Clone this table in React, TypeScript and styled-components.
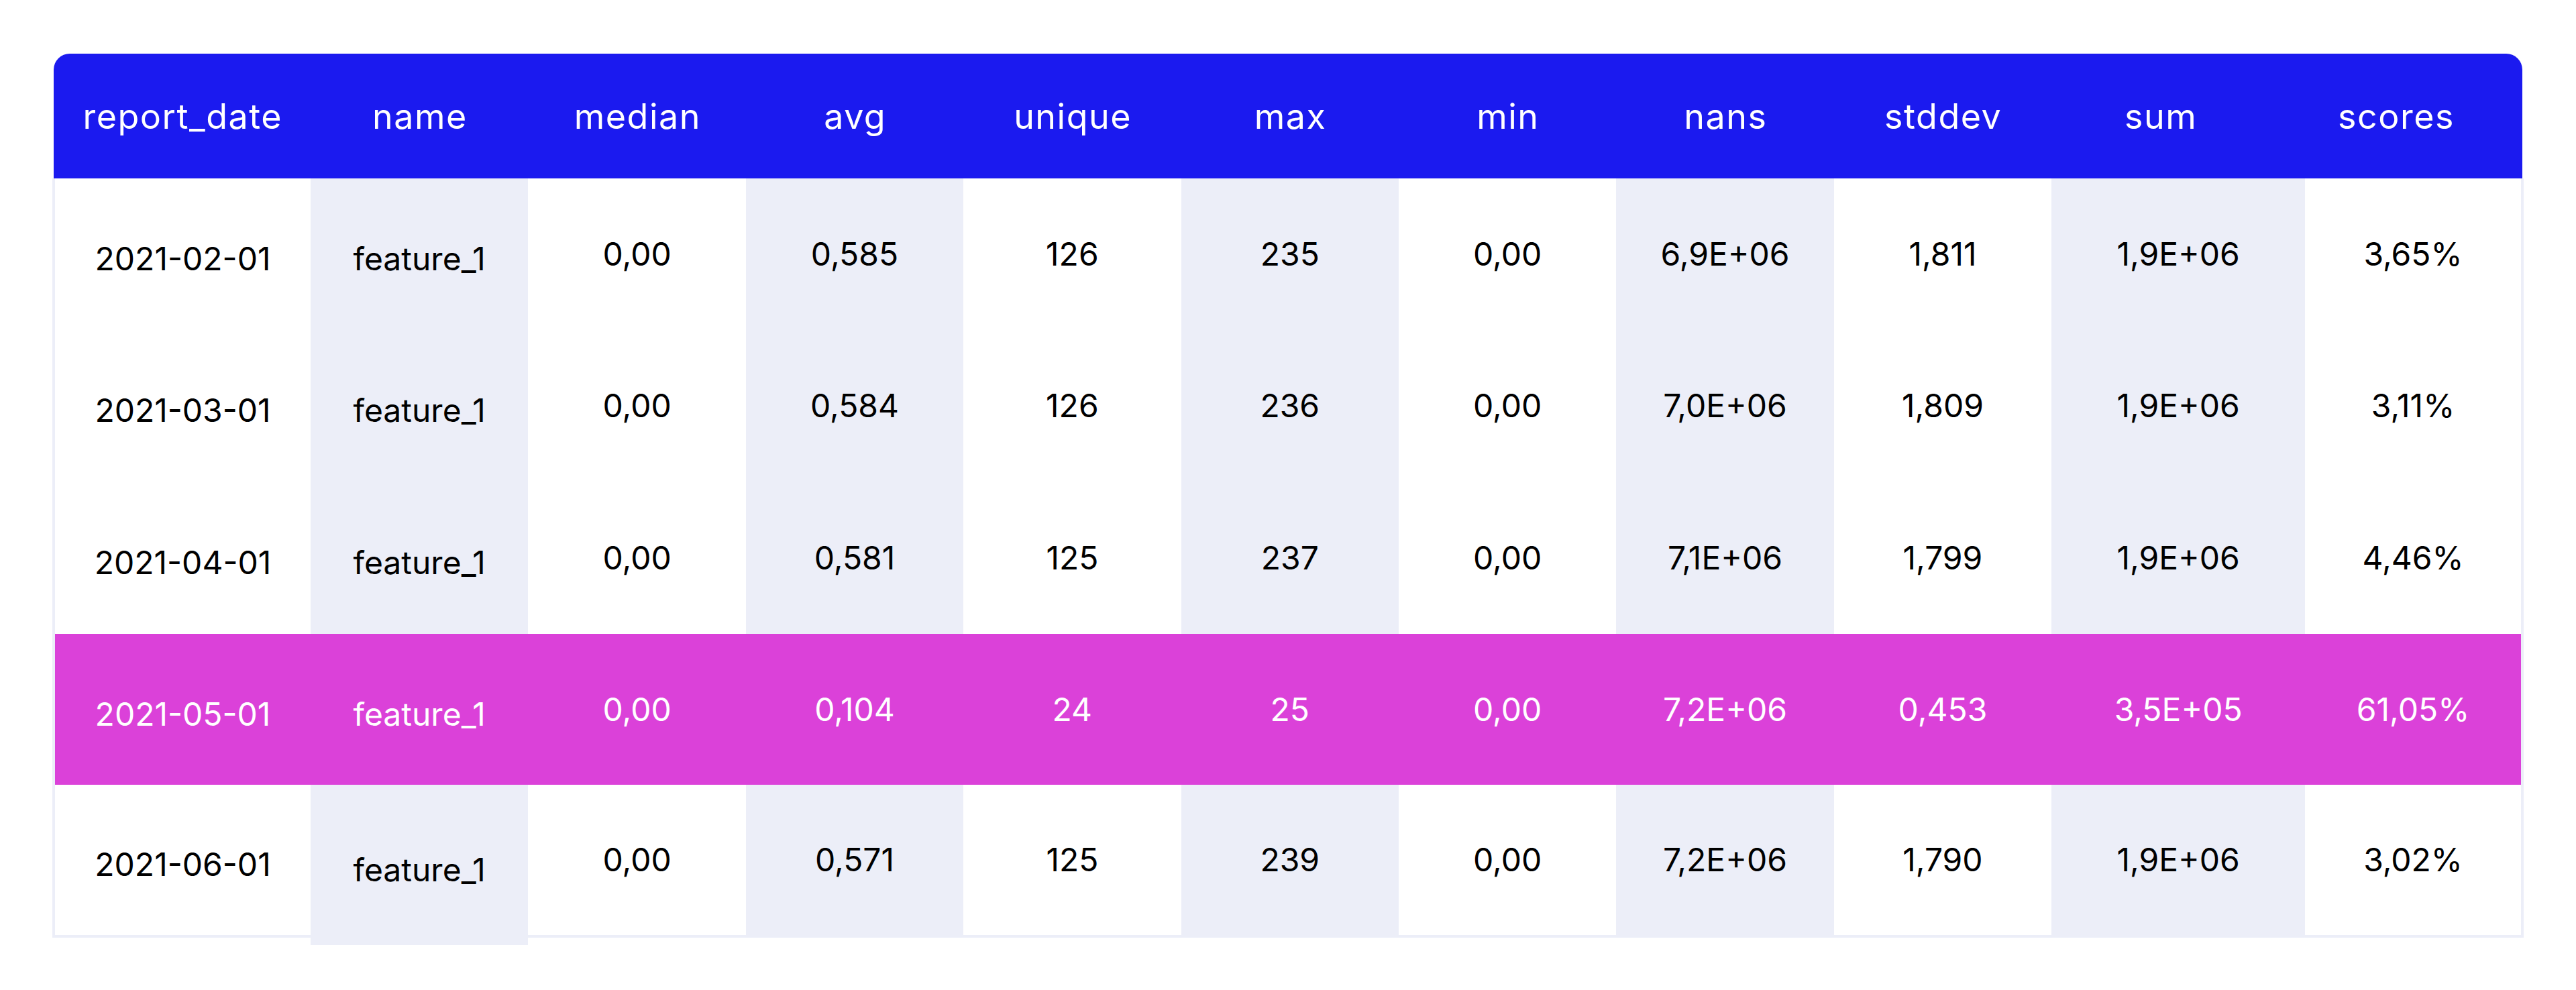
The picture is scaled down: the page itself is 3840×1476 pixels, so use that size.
import React from "react";
import styled, { createGlobalStyle } from "styled-components";

const GlobalStyle = createGlobalStyle`
  html, body {
    margin: 0;
    padding: 0;
    background: #ffffff;
  }
  body {
    font-family: Inter, "Liberation Sans", Arial, sans-serif;
    color: #000000;
  }
`;

const COLS_HEAD = "383px repeat(9, 324.4px) 1fr";
const COLS_BODY = "381px repeat(8, 324.4px) 378px 1fr";

const Page = styled.div`
  padding: 80px;
  width: 3680px;
`;

const Card = styled.div`
  width: 3680px;
  display: flex;
  flex-direction: column;
`;

const HeaderRow = styled.div`
  display: grid;
  grid-template-columns: ${COLS_HEAD};
  height: 186px;
  background: #1b1aef;
  border-radius: 24px 24px 0 0;
`;

const HeadCell = styled.div`
  display: flex;
  align-items: center;
  justify-content: center;
  color: #ffffff;
  font-family: Inter, "Liberation Sans", Arial, sans-serif;
  font-size: 52px;
  line-height: 52px;
  letter-spacing: 1.5px;
  font-weight: 400;
  padding-top: 1px;
  padding-left: 1.5px;
`;

const Body = styled.div`
  margin: 0 -2px;
  border: 4px solid #eceef8;
  border-top: none;
  display: flex;
  flex-direction: column;
`;

const Row = styled.div<{ $highlight?: boolean; $h: number }>`
  display: grid;
  grid-template-columns: ${COLS_BODY};
  height: ${(p) => p.$h}px;
  background: ${(p) => (p.$highlight ? "#db41d9" : "transparent")};
`;

const Cell = styled.div<{
  $shaded?: boolean;
  $highlight?: boolean;
  $shift?: boolean;
  $overhang?: boolean;
}>`
  display: flex;
  align-items: center;
  justify-content: center;
  font-family: Inter, "Liberation Sans", Arial, sans-serif;
  font-size: 48px;
  line-height: 48px;
  font-weight: 400;
  color: ${(p) => (p.$highlight ? "#ffffff" : "#000000")};
  background: ${(p) =>
    p.$highlight ? "transparent" : p.$shaded ? "#eceef8" : "transparent"};
  padding-top: ${(p) => (p.$shift ? 14 : 0)}px;
  margin-bottom: ${(p) => (p.$overhang ? -15 : 0)}px;
  position: relative;
  white-space: nowrap;
`;

const headers = [
  "report_date",
  "name",
  "median",
  "avg",
  "unique",
  "max",
  "min",
  "nans",
  "stddev",
  "sum",
  "scores",
];

const shadedCols = new Set([1, 3, 5, 7, 9]);

const rows: { values: string[]; highlight?: boolean }[] = [
  {
    values: ["2021-02-01", "feature_1", "0,00", "0,585", "126", "235", "0,00", "6,9E+06", "1,811", "1,9E+06", "3,65%"],
  },
  {
    values: ["2021-03-01", "feature_1", "0,00", "0,584", "126", "236", "0,00", "7,0E+06", "1,809", "1,9E+06", "3,11%"],
  },
  {
    values: ["2021-04-01", "feature_1", "0,00", "0,581", "125", "237", "0,00", "7,1E+06", "1,799", "1,9E+06", "4,46%"],
  },
  {
    values: ["2021-05-01", "feature_1", "0,00", "0,104", "24", "25", "0,00", "7,2E+06", "0,453", "3,5E+05", "61,05%"],
    highlight: true,
  },
  {
    values: ["2021-06-01", "feature_1", "0,00", "0,571", "125", "239", "0,00", "7,2E+06", "1,790", "1,9E+06", "3,02%"],
  },
];

const rowHeights = [226, 226, 227, 225, 224];

export default function App() {
  return (
    <>
      <GlobalStyle />
      <Page>
        <Card>
          <HeaderRow>
            {headers.map((h) => (
              <HeadCell key={h}>{h}</HeadCell>
            ))}
          </HeaderRow>
          <Body>
            {rows.map((r, ri) => (
              <Row key={ri} $highlight={r.highlight} $h={rowHeights[ri]}>
                {r.values.map((v, ci) => (
                  <Cell
                    key={ci}
                    $shaded={shadedCols.has(ci)}
                    $highlight={r.highlight}
                    $shift={ci < 2}
                    $overhang={ri === rows.length - 1 && ci === 1}
                  >
                    {v}
                  </Cell>
                ))}
              </Row>
            ))}
          </Body>
        </Card>
      </Page>
    </>
  );
}
